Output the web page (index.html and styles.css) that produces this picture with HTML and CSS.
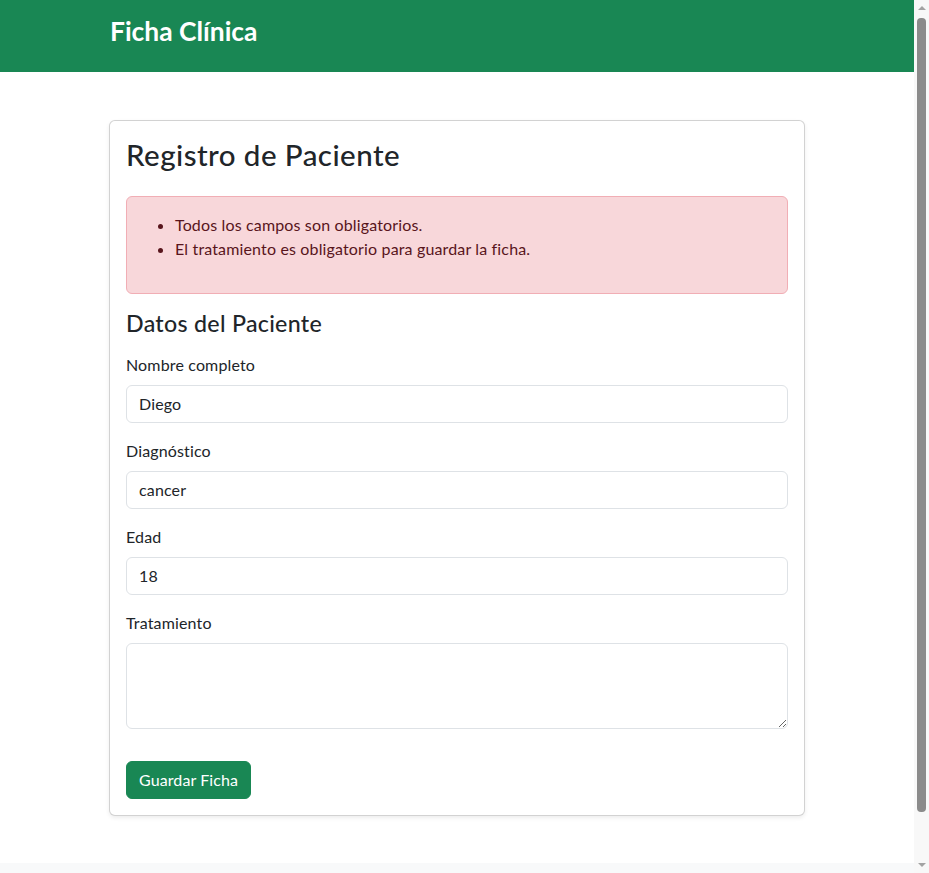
FILE: index.html
```html
<!DOCTYPE html>
<html lang="es">
<head>
<meta charset="utf-8">
<title>Ficha Clínica</title>
<link rel="stylesheet" href="styles.css">
</head>
<body>
<nav class="navbar">
  <div class="container">
    <span class="brand">Ficha Clínica</span>
  </div>
</nav>
<main class="container main">
  <div class="card">
    <h2 class="title">Registro de Paciente</h2>
    <div class="alert">
      <ul class="alert-list">
        <li>Todos los campos son obligatorios.</li>
        <li>El tratamiento es obligatorio para guardar la ficha.</li>
      </ul>
    </div>
    <form class="form">
      <h4 class="section">Datos del Paciente</h4>
      <div class="group">
        <label class="label" for="nombre">Nombre completo</label>
        <input class="control" id="nombre" type="text" value="Diego">
      </div>
      <div class="group">
        <label class="label" for="diag">Diagnóstico</label>
        <input class="control" id="diag" type="text" value="cancer">
      </div>
      <div class="group">
        <label class="label" for="edad">Edad</label>
        <input class="control" id="edad" type="text" value="18">
      </div>
      <div class="group">
        <label class="label" for="trat">Tratamiento</label>
        <textarea class="control area" id="trat" rows="3"></textarea>
      </div>
      <div class="actions">
        <button class="btn" type="button">Guardar Ficha</button>
      </div>
    </form>
  </div>
</main>
<footer class="footer"></footer>
<div class="scrollbar" aria-hidden="true">
  <span class="arrow up"></span>
  <span class="thumb"></span>
  <span class="arrow down"></span>
</div>
</body>
</html>
```
FILE: styles.css
```css
html, body {
  margin: 0;
  padding: 0;
}
body {
  font-family: Lato, "Liberation Sans", sans-serif;
  font-size: 16px;
  line-height: 1.5;
  color: #212529;
  background: #fff;
  letter-spacing: 0.15px;
  margin-right: 15px;
}
*, *::before, *::after {
  box-sizing: border-box;
}
.container {
  max-width: 720px;
  margin: 0 auto;
  padding: 0 12px;
}
.navbar {
  background: #198754;
  height: 72px;
  padding-top: 16px;
}
.brand {
  display: block;
  color: #fff;
  font-size: 26.4px;
  font-weight: 700;
  line-height: 1.2;
  padding-left: 1px;
  letter-spacing: 0;
}
.main {
  margin-top: 48px;
  margin-bottom: 47px;
}
.card {
  border: 1px solid rgba(0, 0, 0, 0.175);
  border-radius: 6px;
  box-shadow: 0 2px 4px rgba(0, 0, 0, 0.075);
  padding: 16px;
  background: #fff;
}
.title {
  margin: 0 0 24px;
  font-size: 29.5px;
  font-weight: 500;
  line-height: 35px;
  letter-spacing: 0.45px;
}
.alert {
  background: #f8d7da;
  border: 1px solid #f1aeb5;
  color: #58151c;
  border-radius: 6px;
  padding: 16px;
  margin-bottom: 16px;
}
.alert-list {
  margin: 0 0 16px;
  padding-left: 32px;
}
.form {
  margin: 0;
}
.section {
  margin: 0 0 16px;
  font-size: 23.2px;
  font-weight: 500;
  line-height: 27px;
  letter-spacing: 0.3px;
}
.group {
  margin-bottom: 16px;
}
.label {
  display: inline-block;
  margin-bottom: 8px;
}
.control {
  display: block;
  width: 100%;
  padding: 6px 12px;
  font-family: inherit;
  font-size: 16px;
  line-height: 1.5;
  letter-spacing: 0.15px;
  color: #212529;
  background: #fff;
  border: 1px solid #dee2e6;
  border-radius: 6px;
  margin: 0;
}
.area {
  height: 86px;
  resize: vertical;
}
.actions {
  padding-top: 16px;
}
.btn {
  font-family: inherit;
  font-size: 16px;
  line-height: 1.5;
  letter-spacing: 0.1px;
  color: #fff;
  background: #198754;
  border: 1px solid #198754;
  border-radius: 6px;
  padding: 6px 12px;
  cursor: pointer;
}
.footer {
  background: #f8f9fa;
  height: 62px;
}
.scrollbar {
  position: fixed;
  top: 0;
  right: 0;
  width: 15px;
  height: 100vh;
  background: #f8f8f8;
  display: flex;
  flex-direction: column;
  align-items: center;
}
.arrow {
  width: 0;
  height: 0;
  border-left: 4px solid transparent;
  border-right: 4px solid transparent;
  flex: none;
}
.arrow.up {
  margin-top: 6px;
  border-bottom: 4px solid #a3a3a3;
}
.arrow.down {
  margin-top: auto;
  margin-bottom: 6px;
  border-top: 4px solid #a3a3a3;
}
.thumb {
  display: block;
  width: 9px;
  height: 794px;
  margin-top: 8px;
  background: #8b8b8b;
  border-radius: 4px;
  flex: none;
}
```
